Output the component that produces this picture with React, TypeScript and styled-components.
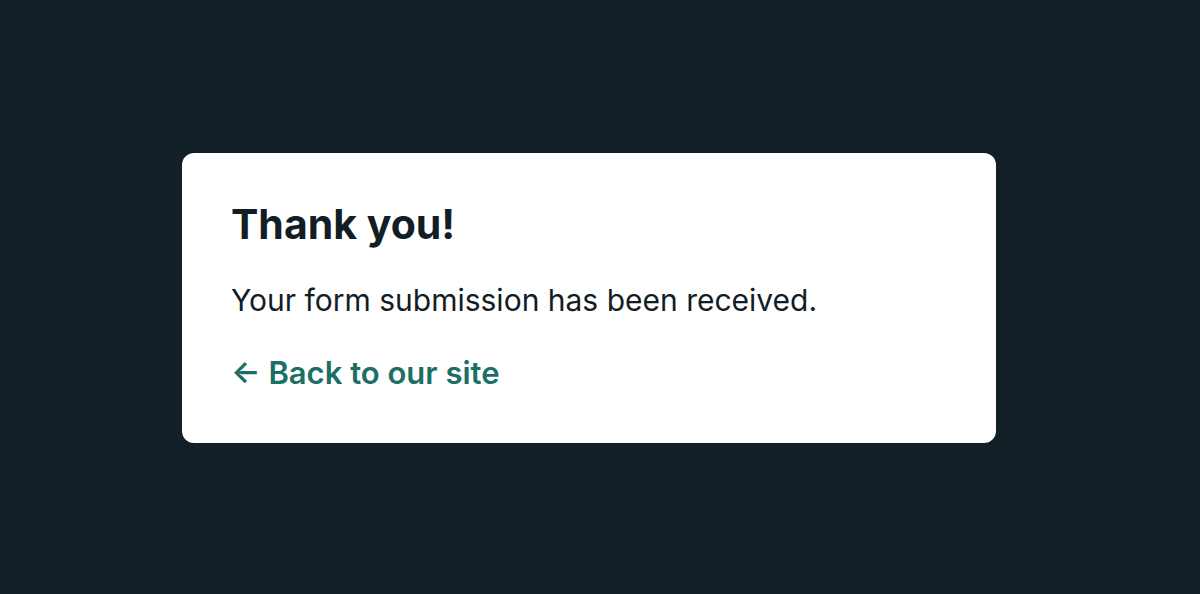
import React from "react";
import styled, { createGlobalStyle } from "styled-components";

const Global = createGlobalStyle`
  html, body { margin: 0; padding: 0; background: #131f26; }
  body { font-family: Inter, "Noto Sans", sans-serif; }
`;

const Page = styled.main`
  min-height: 594px;
  display: flex;
  align-items: center;
  justify-content: center;
  padding: 2px 22px 0 0;
  box-sizing: border-box;
`;

const Card = styled.section`
  width: 814px;
  height: 290px;
  box-sizing: border-box;
  background: #ffffff;
  border-radius: 12px;
  padding: 47px 49px;
  display: flex;
  flex-direction: column;
  align-items: flex-start;
`;

const Title = styled.h1`
  margin: 0;
  font-size: 41px;
  line-height: 48px;
  font-weight: 700;
  letter-spacing: 0;
  color: #121d25;
`;

const Message = styled.p`
  margin: 32px 0 0;
  font-size: 30px;
  line-height: 40px;
  font-weight: 400;
  color: #121d25;
`;

const BackLink = styled.a`
  margin-top: 33px;
  font-size: 31px;
  line-height: 40px;
  font-weight: 600;
  color: #1c6f64;
  text-decoration: none;
`;

export default function App() {
  return (
    <>
      <Global />
      <Page>
        <Card>
          <Title>Thank you!</Title>
          <Message>Your form submission has been received.</Message>
          <BackLink href="#">← Back to our site</BackLink>
        </Card>
      </Page>
    </>
  );
}
